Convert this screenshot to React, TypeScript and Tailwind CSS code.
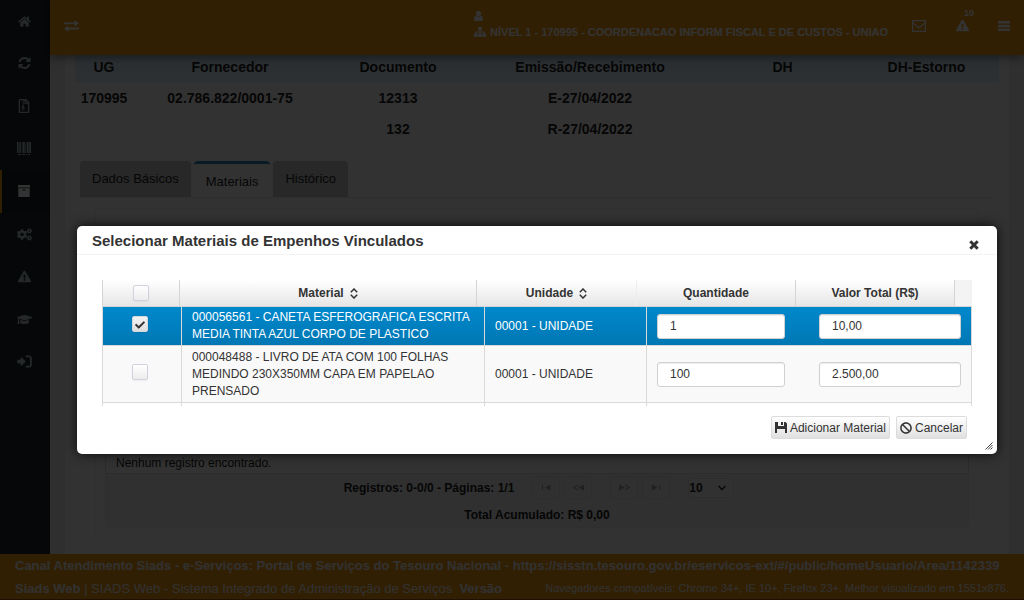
import React from 'react';
import {
  FaHome,
  FaRegFileArchive,
  FaCogs,
  FaExclamationTriangle,
  FaGraduationCap,
  FaBan,
  FaCheck,
} from 'react-icons/fa';

function RefreshIcon() {
  return (
    <svg width="13" height="13" viewBox="0 0 1536 1664" fill="currentColor" aria-hidden="true">
      <path d="M1511 928q0 5-1 7-64 268-268 434.500t-478 166.500q-146 0-282.500-55t-243.500-157l-129 129q-19 19-45 19t-45-19-19-45v-448q0-26 19-45t45-19h448q26 0 45 19t19 45-19 45l-137 137q71 66 161 102t187 36q134 0 250-65t186-179q11-17 53-117 8-23 30-23h192q13 0 22.500 9.500t9.500 22.500zm25-800v448q0 26-19 45t-45 19h-448q-26 0-45-19t-19-45 19-45l138-138q-148-137-349-137-134 0-250 65t-186 179q-11 17-53 117-8 23-30 23h-199q-13 0-22.500-9.500t-9.500-22.500v-7q65-268 270-434.500t480-166.500q146 0 284 55.500t245 156.500l130-129q19-19 45-19t45 19 19 45z" />
    </svg>
  );
}

function SignInIcon() {
  return (
    <svg width="17" height="17" viewBox="0 0 1792 1792" fill="currentColor" aria-hidden="true">
      <path d="M1000 896q0 26-19 45l-384 384q-19 19-45 19t-45-19-19-45v-208h-288q-26 0-45-19t-19-45v-224q0-26 19-45t45-19h288v-208q0-26 19-45t45-19 45 19l384 384q19 19 19 45zm664-352v704q0 119-84.500 203.500t-203.500 84.500h-320q-32 0-32-32v-128q0-32 32-32h320q46 0 71-24t25-72v-704q0-48-25-72t-71-24h-320q-32 0-32-32v-128q0-32 32-32h320q119 0 203.500 84.500t84.500 203.500z" />
    </svg>
  );
}

function UserIcon() {
  return (
    <svg width="9" height="10" viewBox="0 0 9 10" fill="currentColor" aria-hidden="true">
      <path d="M4.500 0a2.500 2.600 0 0 1 2.500 2.600 2.600 2.600 0 0 1-2.500 2.700A2.600 2.600 0 0 1 2 2.600 2.500 2.600 0 0 1 4.500 0zM2 4.800q2.500 2 5 0Q9 5.200 9 8.300 9 10 7.500 10h-6Q0 10 0 8.300 0 5.200 2 4.800z" />
    </svg>
  );
}

function BarcodeIcon() {
  return (
    <svg width="14" height="13" viewBox="0 0 14 13" fill="currentColor" aria-hidden="true">
      <path d="M0 0h1.500v11H0zM2 0h.7v11H2zM3.200 0h1v11h-1zM5.500 0h2.200v11H5.500zM8.500 0h.8v11h-.8zM10 0h1.600v11H10zM12.200 0H14v11h-1.800zM1 12h3v1H1zM5 12h3v1H5zM9 12h1v1H9zM11 12h2v1h-2z" />
    </svg>
  );
}

function ArchiveIcon() {
  return (
    <svg width="12" height="12" viewBox="0 0 12 12" fill="currentColor" fillRule="evenodd" aria-hidden="true">
      <path d="M0 0h12v2.600H0zM0.300 3.300h11.400V12H0.300zM4.800 4.600a.4.4 0 0 0 0 .8h2.400a.4.4 0 0 0 0-.8z" />
    </svg>
  );
}

function EnvelopeIcon() {
  return (
    <svg width="14" height="12" viewBox="0 0 14 12" fill="none" stroke="currentColor" aria-hidden="true">
      <path d="M0.600 0.600h12.800v10.800H0.600z" strokeWidth="1.2" />
      <path d="M0.800 2.600 5.800 7q1.200 0.900 2.400 0l5-4.400" strokeWidth="1.200" />
    </svg>
  );
}

function BarsIcon() {
  return (
    <svg width="12" height="10" viewBox="0 0 12 10" fill="currentColor" aria-hidden="true">
      <path d="M0 0h12v2.400H0zM0 3.800h12v2.400H0zM0 7.600h12V10H0z" />
    </svg>
  );
}

function SitemapIcon() {
  return (
    <svg width="12" height="10" viewBox="0 0 12 10" fill="currentColor" aria-hidden="true">
      <path d="M4.200 0h3.600v3.400H6.500v1.200H11v2h1V10H8.400V6.600h1.400V5.600H6.500v1h1.300V10H4.200V6.600h1.300v-1H2.200v1h1.400V10H0V6.600h1v-2h4.500V3.400H4.200z" />
    </svg>
  );
}

function CloseIcon() {
  return (
    <svg width="10" height="10" viewBox="0 0 10 10" fill="none" stroke="currentColor" strokeWidth="3" aria-hidden="true">
      <path d="M1.300 1.300l7.400 7.400M8.700 1.300L1.300 8.700" />
    </svg>
  );
}

function ExchangeIcon() {
  return (
    <svg width="15" height="12" viewBox="0 0 15 12" fill="currentColor" aria-hidden="true">
      <path d="M0 2.4h10.6V0.2L15 3.3 10.6 6.4V4.2H0z" />
      <path d="M15 7.6H4.4V5.6L0 8.7l4.4 3.1V9.4H15z" />
    </svg>
  );
}

function SortIcon() {
  return (
    <svg width="8" height="11" viewBox="0 0 8 11" fill="none" stroke="currentColor" strokeWidth="1.5" aria-hidden="true">
      <path d="M0.8 4.2 4 1l3.2 3.2M0.8 6.8 4 10l3.2-3.2" />
    </svg>
  );
}

function FloppyIcon() {
  return (
    <svg width="12" height="12" viewBox="0 0 12 12" aria-hidden="true">
      <path fill="#333" fillRule="evenodd" d="M0 0h3v4h6V0h1.500L12 1.500V11h-2V7H2v4H0zM6 0h2v3H6z" />
    </svg>
  );
}

function GripIcon() {
  return (
    <svg width="8" height="8" viewBox="0 0 8 8" stroke="#444" strokeWidth="1" aria-hidden="true">
      <path d="M0.5 7.5l7-7M3 7.5l4.5-4.5M5.5 7.5l2-2" />
    </svg>
  );
}

const menu = [
  { label: 'Início', icon: <FaHome size={13} /> },
  { label: 'Atualizar', icon: <RefreshIcon /> },
  { label: 'Arquivos', icon: <FaRegFileArchive size={14} /> },
  { label: 'Patrimônio', icon: <BarcodeIcon /> },
  { label: 'Almoxarifado', icon: <ArchiveIcon />, active: true },
  { label: 'Configurações', icon: <FaCogs size={15} /> },
  { label: 'Alertas', icon: <FaExclamationTriangle size={13} /> },
  { label: 'Treinamento', icon: <FaGraduationCap size={15} /> },
  { label: 'Sair', icon: <SignInIcon /> },
];

const materials = [
  {
    name: '000056561 - CANETA ESFEROGRAFICA ESCRITA MEDIA TINTA AZUL CORPO DE PLASTICO',
    unit: '00001 - UNIDADE',
    qty: '1',
    total: '10,00',
    checked: true,
  },
  {
    name: '000048488 - LIVRO DE ATA COM 100 FOLHAS MEDINDO 230X350MM CAPA EM PAPELAO PRENSADO',
    unit: '00001 - UNIDADE',
    qty: '100',
    total: '2.500,00',
    checked: false,
  },
];

function Tick({ label, checked }: { label: string; checked: boolean }) {
  return (
    <span className="relative inline-flex align-middle">
      <input
        type="checkbox"
        aria-label={label}
        defaultChecked={checked}
        className="peer size-4 appearance-none rounded-xs border border-[#d0d3de] bg-linear-to-b from-white to-[#ececec] shadow-xs checked:border-[#d8d8d8] checked:from-[#f4f4f4] checked:to-[#dedede]"
      />
      <FaCheck size={10} className="pointer-events-none absolute top-1 left-[3px] hidden text-[#333] peer-checked:block" />
    </span>
  );
}

function PageButton({ label, children }: { label: string; children: React.ReactNode }) {
  return (
    <button
      type="button"
      aria-label={label}
      className="flex h-[23px] w-7 items-center justify-center rounded border border-[#e0e0e0] bg-[#efefef] text-[#a0a0a0]"
    >
      <svg width="11" height="7" viewBox="0 0 11 7" fill="currentColor" aria-hidden="true">
        {children}
      </svg>
    </button>
  );
}

function Sidebar() {
  return (
    <aside className="w-[50px] shrink-0 bg-[#1f272b] text-[#b8c7ce]">
      <nav className="grid h-[383px] grid-rows-9">
        {menu.map((m) => (
          <a
            key={m.label}
            href="#"
            aria-label={m.label}
            className={
              m.active
                ? 'flex items-center justify-center border-l-2 border-[#f39c12] bg-[#1a2125] pr-1 text-white'
                : 'flex items-center justify-center pr-0.5'
            }
          >
            {m.icon}
          </a>
        ))}
      </nav>
    </aside>
  );
}

function Header() {
  return (
    <header className="relative z-10 flex h-[55px] shrink-0 items-center bg-[#f39c12] px-3.5 pb-1 text-white shadow-[0_2px_10px_rgba(0,0,0,0.5)]">
      <button type="button" aria-label="Alternar menu">
        <ExchangeIcon />
      </button>
      <div className="ml-auto flex flex-col pb-1 text-[11px] leading-4 font-bold">
        <span className="flex h-4 items-center">
          <UserIcon />
        </span>
        <span className="flex items-center gap-1">
          <SitemapIcon />
          NÍVEL 1 - 170995 - COORDENACAO INFORM FISCAL E DE CUSTOS - UNIAO
        </span>
      </div>
      <button type="button" aria-label="Mensagens" className="ml-6">
        <EnvelopeIcon />
      </button>
      <button type="button" aria-label="Alertas" className="relative ml-[30px]">
        <FaExclamationTriangle size={13} />
        <span className="absolute -top-3 left-2 text-[9px] leading-3 font-bold">10</span>
      </button>
      <button type="button" aria-label="Opções" className="ml-[29px]">
        <BarsIcon />
      </button>
    </header>
  );
}

function InvoiceTable() {
  return (
    <table className="w-full table-fixed text-center text-sm font-bold">
      <colgroup>
        <col className="w-[58px]" />
        <col className="w-[194px]" />
        <col className="w-[142px]" />
        <col className="w-[242px]" />
        <col className="w-[143px]" />
        <col className="w-[145px]" />
      </colgroup>
      <thead className="bg-[#d9edf7]">
        <tr className="h-[30px]">
          <th>UG</th>
          <th>Fornecedor</th>
          <th>Documento</th>
          <th>Emissão/Recebimento</th>
          <th>DH</th>
          <th>DH-Estorno</th>
        </tr>
      </thead>
      <tbody>
        <tr className="h-[31px]">
          <td>170995</td>
          <td>02.786.822/0001-75</td>
          <td>12313</td>
          <td>E-27/04/2022</td>
          <td />
          <td />
        </tr>
        <tr className="h-[31px]">
          <td />
          <td />
          <td>132</td>
          <td>R-27/04/2022</td>
          <td />
          <td />
        </tr>
      </tbody>
    </table>
  );
}

function Content() {
  return (
    <main className="min-h-0 flex-1 overflow-hidden bg-[#ebebeb] px-[15px]">
      <div className="-mt-[3px] min-h-full bg-[#fafafa] px-2.5 pb-4 text-[#222]">
        <InvoiceTable />
        <div className="mx-[5px] mt-[17px] flex items-end gap-[3px] border-b border-[#e0e0e0] text-[13px]">
          <button type="button" className="h-9 rounded-t bg-[#c6c6c6] px-3">
            Dados Básicos
          </button>
          <button type="button" className="h-9 rounded-t border-t-3 border-[#2a86b8] px-3 pt-0.5">
            Materiais
          </button>
          <button type="button" className="h-9 rounded-t bg-[#c6c6c6] px-3">
            Histórico
          </button>
        </div>
        <div className="mx-5 mt-2.5 border border-[#f0f0f0] px-[9px] pt-[243px] pb-2.5">
          <div className="border border-[#dcdcdc] px-2.5 text-xs leading-5">Nenhum registro encontrado.</div>
          <div className="rounded-b border-x border-b border-[#ececec] bg-[#efefef] text-xs font-bold">
            <div className="flex items-center justify-center gap-[18px] pt-0.5 pl-1">
              <span>Registros: 0-0/0 - Páginas: 1/1</span>
              <div className="flex gap-1">
                <PageButton label="Primeira página">
                  <path d="M1 1h1v5H1zM9.500 0.500v6L4 3.500z" />
                </PageButton>
                <PageButton label="Página anterior">
                  <path d="M5 0.500v1.200L1.600 3.500 5 5.300v1.200L0 4V3zM11 0.500v6L5 3.500z" />
                </PageButton>
              </div>
              <div className="flex gap-1">
                <PageButton label="Próxima página">
                  <path d="M6 0.500v1.200L9.400 3.500 6 5.300v1.200L11 4V3zM0 0.500v6L6 3.500z" />
                </PageButton>
                <PageButton label="Última página">
                  <path d="M8.500 1h1v5h-1zM1 0.500v6L6.500 3.500z" />
                </PageButton>
              </div>
              <span className="relative inline-flex">
                <select
                  aria-label="Registros por página"
                  defaultValue="10"
                  className="h-5 w-[46px] appearance-none rounded border border-[#dedede] bg-[#f3f3f3]"
                >
                  <option>10</option>
                </select>
                <svg
                  className="pointer-events-none absolute top-[7px] right-2"
                  width="8"
                  height="6"
                  viewBox="0 0 8 6"
                  fill="none"
                  stroke="#333"
                  strokeWidth="1.6"
                  aria-hidden="true"
                >
                  <path d="M0.600 1 4 4.600 7.400 1" />
                </svg>
              </span>
            </div>
            <p className="pt-2 pb-[3px] text-center leading-[17px]">Total Acumulado: R$ 0,00</p>
          </div>
        </div>
      </div>
    </main>
  );
}

function Footer() {
  return (
    <footer className="h-[46px] shrink-0 border-b border-[#a04a10] bg-[#f39c12] px-[15px] text-[13px] leading-[23px] text-[#f4f4f4]">
      <p className="font-bold">
        Canal Atendimento Siads - e-Serviços: Portal de Serviços do Tesouro Nacional -
        https://sisstn.tesouro.gov.br/eservicos-ext/#/public/homeUsuario/Area/1142339
      </p>
      <div className="flex justify-between">
        <p>
          <b>Siads Web</b> | SIADS Web - Sistema Integrado de Administração de Serviços &nbsp;<b>Versão</b>
        </p>
        <p className="text-[11px]">
          Navegadores compatíveis: Chrome 34+, IE 10+, Firefox 23+. Melhor visualizado em 1551x876.
        </p>
      </div>
    </footer>
  );
}

const headCell = 'border-r border-[#d4d4d4] p-0';
const field =
  'h-[25px] rounded-[3px] border border-[#d0d0d0] bg-white px-3 text-xs text-[#333] shadow-[inset_0_1px_1px_rgba(0,0,0,0.075)]';
const dialogButton =
  'flex h-[23px] items-center gap-[3px] rounded-xs border border-[#dcdcdc] bg-linear-to-b from-white to-[#e0e0e0] px-[3px]';

function MaterialDialog() {
  return (
    <section
      role="dialog"
      aria-labelledby="dialog-title"
      className="relative rounded-[5px] bg-white text-[#333] shadow-[0_0_12px_rgba(0,0,0,0.8)]"
    >
      <div className="flex h-[29px] items-center justify-between border-b border-[#f3f3f3] pr-[18px] pl-[15px]">
        <h2 id="dialog-title" className="pt-0.5 text-[15px] font-bold">
          Selecionar Materiais de Empenhos Vinculados
        </h2>
        <button type="button" aria-label="Fechar" className="pt-2.5">
          <CloseIcon />
        </button>
      </div>
      <div className="px-[25px] pt-[25px]">
        <div className="border-b border-l border-[#d4d4d4]">
          <table className="w-full table-fixed border-separate border-spacing-0 text-xs">
            <colgroup>
              <col className="w-[77px]" />
              <col className="w-[297px]" />
              <col className="w-[160px]" />
              <col className="w-[159px]" />
              <col className="w-[159px]" />
              <col className="w-[17px]" />
            </colgroup>
            <thead>
              <tr className="h-[26px] bg-linear-to-b from-white to-[#e6e6e6]">
                <th className={headCell}>
                  <Tick label="Selecionar todos" checked={false} />
                </th>
                <th className={headCell}>
                  <span className="inline-flex items-center gap-1.5">
                    Material <SortIcon />
                  </span>
                </th>
                <th className="border-r border-[#eeeeee] p-0">
                  <span className="inline-flex items-center gap-1.5">
                    Unidade <SortIcon />
                  </span>
                </th>
                <th className={headCell}>Quantidade</th>
                <th className={headCell}>Valor Total (R$)</th>
                <td className="bg-[#f3f3f3]" />
              </tr>
            </thead>
          </table>
        </div>
        <div className="h-[99px] overflow-hidden border-x border-[#d9d9d9]">
          <table className="h-[120px] w-full table-fixed border-separate border-spacing-0 text-xs leading-[17px]">
            <colgroup>
              <col className="w-[79px]" />
              <col className="w-[303px]" />
              <col className="w-[162px]" />
              <col className="w-[160px]" />
              <col className="w-[164px]" />
            </colgroup>
            <tbody>
              {materials.map((m) => (
                <tr
                  key={m.name}
                  className={
                    m.checked
                      ? 'h-[39px] bg-linear-to-b from-[#0088cc] to-[#0077b3] text-white'
                      : 'h-[57px] bg-[#f9f9f9]'
                  }
                >
                  <td className="border-r border-b border-[#d9d9d9] p-0 pr-[5px] pb-1 text-center">
                    <Tick label={m.name} checked={m.checked} />
                  </td>
                  <td className="border-r border-b border-[#d9d9d9] px-2.5 py-0">{m.name}</td>
                  <td className="border-r border-b border-[#d9d9d9] px-2.5 py-0">{m.unit}</td>
                  <td className="border-b border-[#d9d9d9] py-0 pr-[22px] pl-2.5">
                    <input aria-label="Quantidade" defaultValue={m.qty} className={'w-full ' + field} />
                  </td>
                  <td className="border-b border-[#d9d9d9] py-0 pr-2.5 pl-3">
                    <input aria-label="Valor total" defaultValue={m.total} className={'w-full ' + field} />
                  </td>
                </tr>
              ))}
              <tr>
                <td className="border-r border-[#d9d9d9]" />
                <td className="border-r border-[#d9d9d9]" />
                <td className="border-r border-[#d9d9d9]" />
                <td />
                <td />
              </tr>
            </tbody>
          </table>
        </div>
      </div>
      <div className="flex justify-end gap-1.5 pt-2.5 pr-[30px] pb-[15px] text-xs">
        <button type="button" className={dialogButton}>
          <FloppyIcon />
          Adicionar Material
        </button>
        <button type="button" className={dialogButton}>
          <FaBan size={12} />
          Cancelar
        </button>
      </div>
      <span className="absolute right-1 bottom-1">
        <GripIcon />
      </span>
    </section>
  );
}

export default function App() {
  return (
    <div className="relative flex h-screen flex-col overflow-hidden bg-white font-['Liberation_Sans',Arial,sans-serif]">
      <div className="flex min-h-0 flex-1">
        <Sidebar />
        <div className="flex min-w-0 flex-1 flex-col">
          <Header />
          <Content />
        </div>
      </div>
      <Footer />
      <div className="absolute inset-0 z-20 bg-black/80 pt-[226px] pr-[27px] pl-[77px]">
        <MaterialDialog />
      </div>
    </div>
  );
}
